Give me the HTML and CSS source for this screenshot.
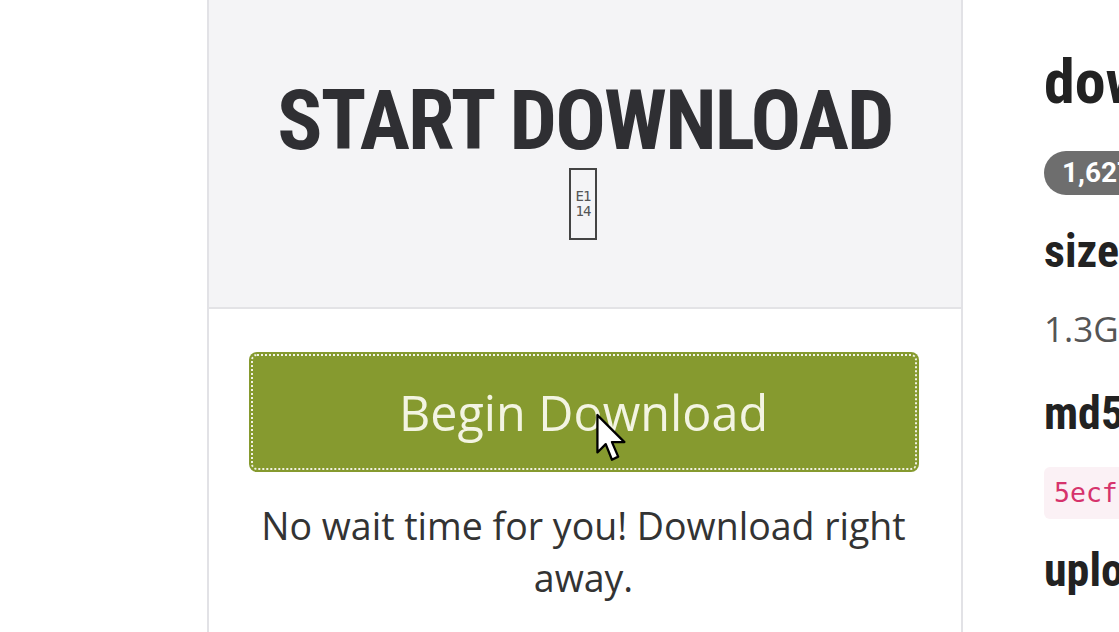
FILE: index.html
```html
<!DOCTYPE html>
<html lang="en">
<head>
<meta charset="utf-8">
<title>Start Download</title>
<link rel="stylesheet" href="styles.css">
</head>
<body>
<div class="page">
  <div class="left-gutter"></div>
  <section class="panel">
    <header class="panel-head">
      <h1 class="title">START DOWNLOAD</h1>
      <span class="tofu"><span>E1</span><span>14</span></span>
    </header>
    <div class="panel-body">
      <button class="btn-download" type="button">Begin Download</button>
      <p class="note">No wait time for you! Download right away.</p>
    </div>
  </section>
  <aside class="info">
    <h2 class="info-title">downloads</h2>
    <span class="badge">1,627</span>
    <h3 class="info-h">size</h3>
    <p class="info-val">1.3GB</p>
    <h3 class="info-h">md5</h3>
    <code class="hash">5ecf2b1a9c0e7d44f31a</code>
    <h3 class="info-h">uploaded</h3>
  </aside>
</div>
<svg class="cursor" width="36" height="54" viewBox="0 0 34 52" aria-hidden="true">
  <path d="M2 2 L2 38 L10 30 L16 45 L22 42 L16 28 L28 28 Z" fill="#fff" stroke="#000" stroke-width="2.2" stroke-linejoin="round"/>
</svg>
</body>
</html>
```

FILE: styles.css
```css
html, body {
  margin: 0;
  padding: 0;
  background: #ffffff;
  overflow: hidden;
}
body {
  width: 1119px;
  height: 632px;
  font-family: "Open Sans", "Liberation Sans", sans-serif;
  color: #333;
  position: relative;
}
.page {
  display: flex;
  align-items: flex-start;
  height: 632px;
}
.left-gutter {
  width: 207px;
  flex: none;
}
.panel {
  width: 752px;
  flex: none;
  height: 632px;
  border-left: 2px solid #e2e2e6;
  border-right: 2px solid #e2e2e6;
  display: flex;
  flex-direction: column;
}
.panel-head {
  height: 309px;
  flex: none;
  background: #f4f4f6;
  border-bottom: 2px solid #e3e3e6;
  display: flex;
  flex-direction: column;
  align-items: center;
  box-sizing: border-box;
  padding-top: 79px;
}
.title {
  margin: 0;
  font-family: "Roboto Condensed", "Liberation Sans Narrow", "Roboto", sans-serif;
  font-weight: 700;
  font-size: 84px;
  line-height: 84px;
  color: #2f2f33;
  letter-spacing: -1.8px;
}
.tofu {
  margin-top: 5px;
  margin-right: 4px;
  width: 24px;
  height: 68px;
  border: 2px solid #444;
  display: flex;
  flex-direction: column;
  align-items: center;
  justify-content: center;
  font-family: "DejaVu Sans Mono", monospace;
  font-size: 14px;
  line-height: 15px;
  color: #555;
  letter-spacing: -1px;
}
.panel-body {
  flex: 1;
  background: #fff;
  padding: 43px 43px 0 40px;
  display: flex;
  flex-direction: column;
  align-items: center;
}
.btn-download {
  flex: none;
  width: 670px;
  height: 120px;
  background: #869a2f;
  border: none;
  border-radius: 8px;
  outline: 2px dotted #f2f2e6;
  outline-offset: -4px;
  color: #f3f4e2;
  font-family: "Open Sans", "Liberation Sans", sans-serif;
  font-size: 48.5px;
  padding: 0;
  cursor: pointer;
}
.note {
  margin: 28px 0 0;
  width: 700px;
  text-align: center;
  font-size: 37.5px;
  line-height: 52px;
  color: #333;
}
.info {
  padding-left: 81px;
  flex: none;
  width: 300px;
  white-space: nowrap;
  display: flex;
  flex-direction: column;
  align-items: flex-start;
}
.info-title {
  margin: 44px 0 0;
  font-family: "Roboto Condensed", "Liberation Sans Narrow", "Roboto", sans-serif;
  font-weight: 700;
  font-size: 62px;
  line-height: 76px;
  color: #222;
}
.badge {
  margin-top: 31px;
  background: #6e6e6e;
  color: #fff;
  font-family: "Roboto", sans-serif;
  font-weight: 700;
  font-size: 28px;
  line-height: 44px;
  padding: 0 18px;
  border-radius: 22px;
}
.info-h {
  margin: 28px 0 0;
  font-family: "Roboto Condensed", "Liberation Sans Narrow", "Roboto", sans-serif;
  font-weight: 700;
  font-size: 46px;
  line-height: 56px;
  color: #222;
}
.info-val {
  margin: 26px 0 0;
  font-size: 35px;
  line-height: 48px;
  color: #555;
}
.info-val + .info-h {
  margin-top: 32px;
}
.hash {
  margin-top: 26px;
  background: #fbf1f5;
  color: #d6336c;
  font-family: "DejaVu Sans Mono", monospace;
  font-size: 26.5px;
  line-height: 52px;
  padding: 0 10px;
  border-radius: 6px;
}
.hash + .info-h {
  margin-top: 23px;
}
.cursor {
  position: absolute;
  left: 595px;
  top: 413px;
}
```
